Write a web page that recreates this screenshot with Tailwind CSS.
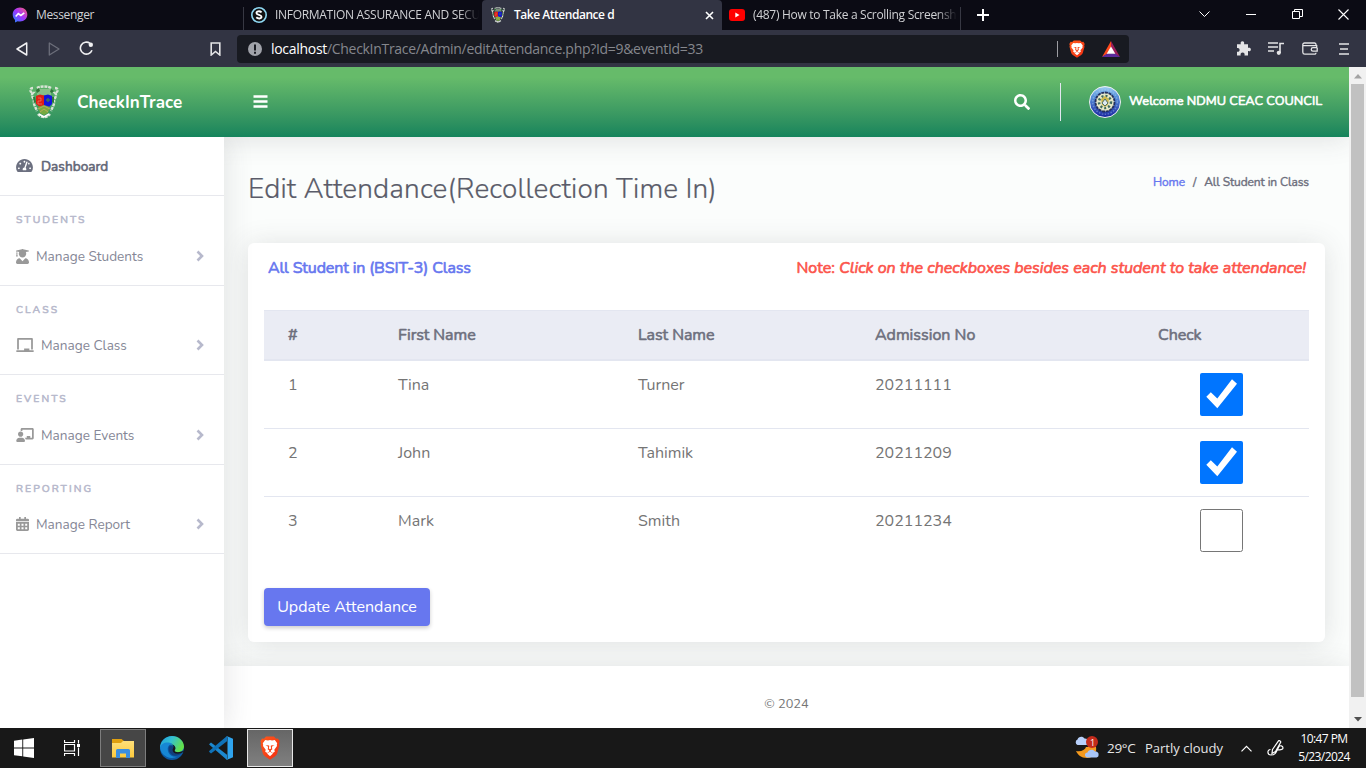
<!DOCTYPE html>
<html lang="en">
<head>
<meta charset="utf-8">
<title>Take Attendance</title>
<script src="https://cdn.jsdelivr.net/npm/@tailwindcss/browser@4"></script>
</head>
<body class="w-[1366px] h-[768px] overflow-hidden flex flex-col whitespace-nowrap font-['Nunito','Lato',sans-serif] text-[#757575]">
<svg class="absolute w-0 h-0">
  <defs>
    <linearGradient id="msg" x1="0" y1="1" x2="1" y2="0"><stop offset="0" stop-color="#1a8cff"/><stop offset=".5" stop-color="#a033ff"/><stop offset="1" stop-color="#ff6070"/></linearGradient>
    <linearGradient id="edge1" x1="0" y1="0" x2="1" y2=".4"><stop offset="0" stop-color="#1c9be0"/><stop offset=".5" stop-color="#35c1d0"/><stop offset="1" stop-color="#62e04c"/></linearGradient>
    <linearGradient id="lion" x1="0" y1="0" x2="1" y2="1"><stop offset="0" stop-color="#ff5a1c"/><stop offset="1" stop-color="#f02d12"/></linearGradient>
    <linearGradient id="folder" x1="0" y1="0" x2="0" y2="1"><stop offset="0" stop-color="#ffe07a"/><stop offset="1" stop-color="#fdc93c"/></linearGradient>
    <linearGradient id="seal" x1="0" y1="0" x2="0" y2="1"><stop offset="0" stop-color="#9fd0f5"/><stop offset=".3" stop-color="#5a95dc"/><stop offset="1" stop-color="#1724a0"/></linearGradient>
  </defs>
  <symbol id="brave" viewBox="0 0 20 24">
    <path fill="url(#lion)" d="M6 .5h8l2 2.200 2-.3 1.600 2.900-.6 2 .4 1.600-2.200 8.400c-.4 1.400-1.300 2.300-2.400 3.100L10 23.700l-4.800-3.300c-1.100-.8-2-1.700-2.400-3.100L.6 8.900 1 7.300l-.6-2L2 2.400l2 .3z"/>
    <path fill="#fff" d="M10 4l2 .4 2.800-.4 2.400 3.200-.4 1.600.2 1.200-2.700 3.800.5 1.900-2.100 1.300-2-1.500.2-1.300 1.500-1-.5-1.500.4-1.400 2.300-.9-2.700-.2-1.200.6.4 2.700-1.100.7-1.100-.7.4-2.700-1.200-.6-2.700.2 2.300.9.400 1.400-.5 1.500 1.500 1 .2 1.300-2 1.500-2.100-1.300.5-1.900L3 10l.2-1.200-.4-1.600L5.200 4 8 4.400z"/>
    <path fill="#fff" d="M10 15.800l3 1.700-3 2.700-3-2.700z"/>
  </symbol>
  <symbol id="crest" viewBox="0 0 30 34">
    <g fill="none" stroke="#d9e3d6" stroke-width="2.400" stroke-dasharray="3 .8">
      <path d="M4 3c-4 0-3 5 0 5-3 3 1 5 1 8-1 3 2 7 3 10M26 3c4 0 3 5 0 5 3 3-1 5-1 8 1 3-2 7-3 10"/>
      <path d="M8 3c3-2 11-2 14 0M9 29c3 4 9 4 12 0"/>
    </g>
    <path fill="#a8cba0" d="M8 4h14v6H8z" opacity=".6"/>
    <path fill="#31763a" d="M7 5l3-2 1 3-3 2zM22 4l3 2-2 2-2-1zM4 12l2 0 1 5-2 1zM25 12l-2 0 0 5 2 1z"/>
    <path fill="#e01e14" d="M7 11l4-1.500 4 1v12l-5-1-3-3z"/>
    <path fill="#1414dc" d="M15 10.500l4-1 4 1.500v8l-3 3-5 1z"/>
    <path fill="none" stroke="#f3a68e" stroke-width=".5" d="M9 13h3v3H9v3h4"/>
    <path fill="none" stroke="#3c6f60" stroke-width="1.500" d="M17 15h4M19 13v4"/>
    <path fill="#78a940" d="M9 22l6-2 6 2-2 6-4 2-4-2z"/>
    <path stroke="#b9a95a" stroke-width="1" fill="none" d="M9 24l6-3 6 3M11 27l4-3 4 3"/>
    <path stroke="#fff" stroke-width="1.500" fill="none" d="M10 29l5 3 5-3"/>
  </symbol>
  <symbol id="chev" viewBox="0 0 8 12"><path d="M1.500 1.500L6 6l-4.500 4.500" fill="none" stroke="#b7b9cc" stroke-width="2.600"/></symbol>
  <symbol id="checked" viewBox="0 0 43 43"><rect width="43" height="43" rx="2" fill="#0075ff"/><path d="M6.300 23.700l4.500-4.500 6.500 6.300L32 6.300l5 4.400-19.700 24.600z" fill="#fff"/></symbol>
</svg>

<!-- Tab strip -->
<div class="h-[30px] shrink-0 bg-[#0b0b14] flex font-['Open_Sans',sans-serif] text-[12px] text-[#d0d1d4]">
  <div class="w-[244px] flex items-center pl-[12px] border-r border-[#373843] [border-image:linear-gradient(transparent_24%,#373843_24%)_1]">
    <svg class="w-4 h-4" viewBox="0 0 16 16"><path fill="url(#msg)" d="M8 .5c4.300 0 7.300 3 7.300 7s-3 7-7.300 7c-.8 0-1.600-.1-2.300-.3L3 15.500v-2.600C1.500 11.600.7 9.700.7 7.500c0-4 3-7 7.300-7z"/><path d="M3.700 9.500l2.600-3 2.600 2 3.400-2.700" fill="none" stroke="#fff" stroke-width="1.600"/></svg>
    <span class="ml-2 tracking-[-0.35px]">Messenger</span>
  </div>
  <div class="w-[238px] flex items-center pl-[7px]">
    <svg class="w-4 h-4 shrink-0" viewBox="0 0 16 16"><circle cx="8" cy="8" r="7.200" fill="#111" stroke="#8fd8f2" stroke-width="1.600"/><path d="M10.600 5.400C8.500 3.500 5.300 4.200 5.500 6.100c.2 2.300 5 1.300 5 3.700 0 2-3.300 2.300-5.200.5" fill="none" stroke="#fff" stroke-width="1.900"/></svg>
    <span class="ml-2 w-[204px] overflow-hidden tracking-[-0.3px] [mask-image:linear-gradient(90deg,#000_90%,transparent)]">INFORMATION ASSURANCE AND SECURITY</span>
  </div>
  <div class="w-[240px] bg-[#323443] rounded-t-[4px] flex items-center pl-2 pr-[7px] text-white font-semibold">
    <svg class="w-4 h-4"><use href="#crest"/></svg>
    <span class="ml-2 tracking-[-0.47px]">Take Attendance d</span>
    <svg class="w-[9px] h-[9px] ml-auto mr-px" viewBox="0 0 9 9"><path d="M1 1l7 7M8 1L1 8" stroke="#fff" stroke-width="1.600"/></svg>
  </div>
  <div class="w-[239px] flex items-center pl-[7px] border-r border-[#373843] [border-image:linear-gradient(transparent_24%,#373843_24%)_1]">
    <svg class="w-4 h-3 shrink-0" viewBox="0 0 16 12"><rect width="16" height="12" rx="3" fill="#f00"/><path d="M6.300 3.500v5L10.500 6z" fill="#fff"/></svg>
    <span class="ml-2 w-[204px] overflow-hidden tracking-[-0.3px] [mask-image:linear-gradient(90deg,#000_90%,transparent)]">(487) How to Take a Scrolling Screenshot</span>
  </div>
  <svg class="w-3 h-3 mt-[9px] ml-4" viewBox="0 0 12 12"><path d="M6 0v12M0 6h12" stroke="#fff" stroke-width="2"/></svg>
  <svg class="w-[11px] h-[7px] mt-[11px] ml-auto" viewBox="0 0 11 7"><path d="M.5.5l5 5 5-5" fill="none" stroke="#fff" stroke-width="1"/></svg>
  <svg class="w-[10px] h-px mt-[14px] ml-[36px]"><rect width="10" height="1" fill="#fff"/></svg>
  <svg class="w-[11px] h-[11px] mt-[9px] ml-[36px]" viewBox="0 0 11 11"><path d="M.5 2.500h7v7h-7zM2.500 2.500v-2h8v7h-3" fill="none" stroke="#fff"/></svg>
  <svg class="w-[11px] h-[11px] mt-[9px] ml-[35px] mr-[17px]" viewBox="0 0 11 11"><path d="M.5.5l10 10M10.500.5l-10 10" stroke="#fff" stroke-width="1.100"/></svg>
</div>

<!-- Toolbar -->
<div class="h-[37px] shrink-0 bg-[#323443] flex items-center font-['Open_Sans',sans-serif] text-[14px]">
  <svg class="w-3 h-[14px] ml-4" viewBox="0 0 12 14"><path d="M10.700 1v12L1 7z" fill="none" stroke="#f0f0f2" stroke-width="1.500" stroke-linejoin="round"/></svg>
  <svg class="w-3 h-[14px] ml-[20px]" viewBox="0 0 12 14"><path d="M1.300 1v12L11 7z" fill="none" stroke="#6c6e7a" stroke-width="1.300" stroke-linejoin="round"/></svg>
  <svg class="w-[15px] h-[15px] ml-[19px]" viewBox="0 0 15 15"><path d="M11 2.300A6 6 0 1 0 13 9.300" fill="none" stroke="#f0f0f2" stroke-width="1.600"/><circle cx="11.800" cy="3.800" r="2.200" fill="#f0f0f2"/></svg>
  <svg class="w-[11px] h-[14px] ml-[116px]" viewBox="0 0 11 14"><path d="M1.200 1h8.600v12L5.500 9.500 1.200 13z" fill="none" stroke="#e4e4e6" stroke-width="1.600"/></svg>
  <div class="ml-[16px] w-[892px] h-[28px] rounded bg-[#181a21] flex items-center pl-[11px] pr-[9px] text-[#85878d]">
    <svg class="w-[14px] h-[14px]" viewBox="0 0 14 14"><circle cx="7" cy="7" r="7" fill="#a0a2a9"/><path d="M7 2.500v6M7 9.700v2" stroke="#181a21" stroke-width="2"/></svg>
    <span class="ml-[9px] -mt-px tracking-[-0.3px]"><span class="text-white">localhost</span>/CheckInTrace/Admin/editAttendance.php?Id=9&amp;eventId=33</span>
    <div class="ml-auto w-px h-4 bg-[#9c9da2]"></div>
    <svg class="w-4 h-[18px] ml-[11px]" viewBox="0 0 20 24" preserveAspectRatio="none"><use href="#brave" width="20" height="24"/></svg>
    <svg class="w-[18px] h-[16px] ml-[17px]" viewBox="0 0 18 16"><path d="M9 0L0 16l9-5z" fill="#ff4a1c"/><path d="M9 0l9 16-9-5z" fill="#9c1f5a"/><path d="M0 16h18l-5-3.500H5z" fill="#5a2a9c"/><path d="M9 5.500l4.300 7.200H4.700z" fill="#fff"/></svg>
  </div>
  <svg class="w-[15px] h-[15px] ml-[107px]" viewBox="0 0 15 15"><path fill="#e4e4e6" d="M1 3.200h3.800C4.300 1.400 5 .2 6.400.2S8.600 1.400 8 3.200h4v3.600c1.700-.5 2.900.2 2.900 1.600S13.700 10.500 12 10v4.400H8.500c.5-1.900-.4-2.900-1.900-2.900s-2.400 1-1.900 2.900H1v-3.700c1.600.4 2.600-.5 2.600-1.800S2.600 6.700 1 7.100z"/></svg>
  <svg class="w-4 h-[13px] ml-[17px]" viewBox="0 0 16 13"><path d="M0 1h10M0 5h10M0 9h6" stroke="#e4e4e6" stroke-width="1.500"/><path d="M12 11V1.500h4" fill="none" stroke="#e4e4e6" stroke-width="1.600"/><circle cx="10.800" cy="10.800" r="2.100" fill="#e4e4e6"/></svg>
  <svg class="w-4 h-[13px] ml-[18px]" viewBox="0 0 16 13"><path d="M14 4V2.500A1.500 1.500 0 0 0 12.500 1H2.500A1.700 1.700 0 0 0 .8 2.700v7.600A2 2 0 0 0 2.800 12.200h9.700a1.500 1.500 0 0 0 1.500-1.500M1 3.700h13.700v2H11a1.700 1.700 0 0 0 0 3.500h4.200V5.700" fill="none" stroke="#e4e4e6" stroke-width="1.300"/></svg>
  <svg class="w-[10px] h-[12px] ml-[21px]" viewBox="0 0 10 12"><path d="M0 1h10M1 6h8M0 11h10" stroke="#e4e4e6" stroke-width="1.500"/></svg>
</div>

<!-- Page viewport -->
<div class="h-[661px] shrink-0 flex bg-[#fbfdfc] overflow-hidden">
  <div class="w-[1349px] flex flex-col overflow-hidden">
    <header class="h-[70px] shrink-0 flex items-center relative z-[5] bg-linear-to-b from-[#66bb6a] from-15% to-[#14845c] text-white shadow-[0_2px_28px_rgba(58,59,69,.15)]">
      <svg class="w-[30px] h-[34px] ml-[29px]"><use href="#crest"/></svg>
      <span class="ml-[18px] mt-px text-[17px] font-bold tracking-[0.03px] w-[106px]">CheckInTrace</span>
      <svg class="w-[15px] h-[13px] ml-[70px] -mt-[2px]" viewBox="0 0 15 13"><path d="M.5 1.500h14M.5 6.500h14M.5 11.500h14" stroke="#fff" stroke-width="2.500"/></svg>
      <svg class="w-4 h-4 ml-auto" viewBox="0 0 512 512" fill="#fff"><path d="M505 442.700L405.300 343c-4.500-4.500-10.600-7-17-7H372c27.600-35.300 44-79.700 44-128C416 93.100 322.900 0 208 0S0 93.100 0 208s93.100 208 208 208c48.300 0 92.700-16.400 128-44v16.300c0 6.400 2.500 12.500 7 17l99.700 99.700c9.400 9.400 24.600 9.400 33.900 0l28.300-28.300c9.400-9.400 9.400-24.600.1-34zM208 336c-70.700 0-128-57.200-128-128 0-70.700 57.200-128 128-128 70.700 0 128 57.200 128 128 0 70.700-57.200 128-128 128z"/></svg>
      <div class="w-px h-[38px] ml-[30px] bg-[#e3e6f0]"></div>
      <svg class="w-8 h-8 ml-[28px]" viewBox="0 0 32 32"><circle cx="16" cy="16" r="15.500" fill="url(#seal)" stroke="#eef2ef"/><circle cx="16" cy="16" r="12.300" fill="none" stroke="#c9dcf2" stroke-width="1.500" stroke-dasharray="1.500 1.500" opacity=".35"/><circle cx="16" cy="16" r="9.500" fill="#e6e8c8" stroke="#24305e" stroke-width="1.800" stroke-dasharray="3 .7"/><circle cx="16" cy="16" r="6" fill="none" stroke="#3e6a5e" stroke-width="2.500" stroke-dasharray="2 2"/><path d="M12 13l4-3 4 3-1 6-3 2-3-2z" fill="#cdb94f"/><path d="M13 17l3-4 3 4-3 3z" fill="#dfeaf0" stroke="#31585c" stroke-width=".8"/></svg>
      <span class="ml-2 mr-[27px] w-[193px] text-[12.800px] [-webkit-text-stroke:0.600px]">Welcome NDMU CEAC COUNCIL</span>
    </header>

    <div class="flex-1 flex min-h-0">
      <!-- Sidebar -->
      <nav class="w-[224px] shrink-0 bg-white relative z-10 shadow-[0_2px_28px_rgba(58,59,69,.15)] [clip-path:inset(0_-40px_0_0)] text-[13.600px] text-[#858796] [&>section]:border-b [&>section]:border-[#e7e8ed] [&>section]:px-4">
        <section class="h-[59px] flex items-center text-[#636777]">
          <svg class="w-[17px] h-[15px] -mt-px" viewBox="0 0 576 512" fill="#6c7080"><path d="M288 32C128.940 32 0 160.940 0 320c0 52.800 14.250 102.260 39.060 144.800 5.610 9.620 16.300 15.200 27.440 15.200h443c11.140 0 21.830-5.580 27.440-15.200C561.750 422.260 576 372.800 576 320c0-159.060-128.940-288-288-288zm0 64c14.710 0 26.580 10.130 30.320 23.650-1.110 2.260-2.640 4.230-3.450 6.670l-9.220 27.670c-5.130 3.490-10.970 6.010-17.640 6.010-17.670 0-32-14.330-32-32S270.330 96 288 96zM96 384c-17.670 0-32-14.330-32-32s14.330-32 32-32 32 14.330 32 32-14.330 32-32 32zm48-160c-17.670 0-32-14.330-32-32s14.330-32 32-32 32 14.330 32 32-14.330 32-32 32zm246.770-72.410l-61.330 184C343.130 347.330 352 364.540 352 384c0 11.720-3.380 22.550-8.880 32H232.880c-5.500-9.450-8.880-20.280-8.880-32 0-33.940 26.500-61.430 59.900-63.590l61.340-184.010c4.170-12.560 17.730-19.450 30.360-15.170 12.570 4.190 19.350 17.790 15.170 30.360zm14.660 57.200l15.520-46.550c3.470-1.290 7.130-2.230 11.050-2.230 17.670 0 32 14.330 32 32s-14.330 32-32 32c-11.380-.01-20.890-6.280-26.570-15.220zM480 384c-17.670 0-32-14.330-32-32s14.330-32 32-32 32 14.330 32 32-14.330 32-32 32z"/></svg>
          <span class="ml-2 mt-[2px] tracking-[0.03px] [-webkit-text-stroke:0.600px]">Dashboard</span>
        </section>
        <section class="h-[90px] pt-4">
          <div class="h-4 leading-4 text-[10.400px] [-webkit-text-stroke:0.550px] tracking-[2.080px] text-[#b7b9cc]">STUDENTS</div>
          <div class="mt-[10px] h-[36px] flex items-center">
            <svg class="w-[13px] h-[15px]" viewBox="0 0 448 512" fill="#999"><path d="M319.400 320.600L224 416l-95.400-95.400C57.100 323.700 0 382.200 0 454.400v9.600c0 26.500 21.500 48 48 48h352c26.500 0 48-21.500 48-48v-9.600c0-72.200-57.100-130.700-128.600-133.800zM13.600 79.800l6.400 1.500v58.400c-7 4.200-12 11.500-12 20.300 0 8.400 4.600 15.400 11.100 19.700L3.500 242c-1.700 6.900 2.100 14 7.600 14h41.800c5.500 0 9.300-7.100 7.600-14l-15.600-62.300C51.400 175.400 56 168.400 56 160c0-8.800-5-16.100-12-20.300V87.100l66 15.900c-8.600 17.200-14 36.400-14 57 0 70.700 57.300 128 128 128s128-57.300 128-128c0-20.600-5.300-39.800-14-57l96.300-23.200c18.200-4.400 18.200-27.100 0-31.500l-190.400-46c-13-3.100-26.700-3.100-39.700 0L13.600 48.200c-18.100 4.400-18.100 27.200 0 31.600z"/></svg>
            <span class="ml-[7px] mt-[2px]">Manage Students</span><svg class="w-2 h-3 ml-auto mr-1"><use href="#chev"/></svg>
          </div>
        </section>
        <section class="h-[89px] pt-4">
          <div class="h-4 leading-4 text-[10.400px] [-webkit-text-stroke:0.550px] tracking-[2.080px] text-[#b7b9cc]">CLASS</div>
          <div class="mt-[9px] h-[36px] flex items-center">
            <svg class="w-[18px] h-[14px]" viewBox="0 0 640 512" fill="#999"><path d="M96 64h448v352h64V40c0-22.060-17.940-40-40-40H72C49.940 0 32 17.940 32 40v376h64V64zm528 384H480v-64H288v64H16c-8.840 0-16 7.160-16 16v32c0 8.840 7.160 16 16 16h608c8.840 0 16-7.160 16-16v-32c0-8.840-7.160-16-16-16z"/></svg>
            <span class="ml-[7px] mt-[2px]">Manage Class</span><svg class="w-2 h-3 ml-auto mr-1"><use href="#chev"/></svg>
          </div>
        </section>
        <section class="h-[90px] pt-4">
          <div class="h-4 leading-4 text-[10.400px] [-webkit-text-stroke:0.550px] tracking-[2.080px] text-[#b7b9cc]">EVENTS</div>
          <div class="mt-[10px] h-[36px] flex items-center">
            <svg class="w-[18px] h-[14px]" viewBox="0 0 640 512" fill="#999"><path d="M208 352c-2.390 0-4.780.35-7.060 1.090C187.980 357.300 174.350 360 160 360c-14.350 0-27.980-2.700-40.950-6.910-2.280-.74-4.660-1.090-7.050-1.090C49.940 352-.33 402.480 0 464.620.14 490.880 21.730 512 48 512h224c26.270 0 47.860-21.120 48-47.380.33-62.140-49.940-112.620-112-112.620zm-48-32c53.020 0 96-42.980 96-96s-42.980-96-96-96-96 42.980-96 96 42.980 96 96 96zM592 0H208c-26.470 0-48 22.250-48 49.590V96c23.420 0 45.100 6.780 64 17.800V64h352v288h-64v-64H384v64h-76.240c19.100 16.690 33.120 38.730 39.690 64H592c26.470 0 48-22.250 48-49.590V49.590C640 22.250 618.470 0 592 0z"/></svg>
            <span class="ml-[7px] mt-[2px]">Manage Events</span><svg class="w-2 h-3 ml-auto mr-1"><use href="#chev"/></svg>
          </div>
        </section>
        <section class="h-[89px] pt-4">
          <div class="h-4 leading-4 text-[10.400px] [-webkit-text-stroke:0.550px] tracking-[2.080px] text-[#b7b9cc]">REPORTING</div>
          <div class="mt-[9px] h-[36px] flex items-center">
            <svg class="w-[13px] h-[14px]" viewBox="0 0 13 14" fill="#999"><path d="M3 0h1.700v1.700h3.600V0H10v1.700h1.500A1.400 1.400 0 0 1 13 3.200v1H0v-1a1.400 1.400 0 0 1 1.400-1.500H3z"/><path fill-rule="evenodd" d="M0 5h13v7.500a1.400 1.400 0 0 1-1.400 1.500H1.400A1.400 1.400 0 0 1 0 12.500zM1.800 6.700v2h2v-2zm3.700 0v2h2v-2zm3.700 0v2h2v-2zm-7.400 3.500v2h2v-2zm3.700 0v2h2v-2zm3.700 0v2h2v-2z"/></svg>
            <span class="ml-[7px] mt-[2px]">Manage Report</span><svg class="w-2 h-3 ml-auto mr-1"><use href="#chev"/></svg>
          </div>
        </section>
      </nav>

      <!-- Content -->
      <main class="flex-1 flex flex-col">
        <div class="h-[106px] shrink-0 pl-6 pr-10 flex justify-between">
          <h1 class="mt-[35px] leading-[34px] text-[28px] font-light text-[#5a5c69] tracking-[0.15px] [-webkit-text-stroke:0.200px]">Edit Attendance(Recollection Time In)</h1>
          <div class="mt-[36px] h-[18px] leading-[18px] flex text-[12px] tracking-[-0.11px] text-[#6e707e] [-webkit-text-stroke:0.400px]"><span class="text-[#6777ef]">Home</span><span class="mx-2">/</span><span>All Student in Class</span></div>
        </div>
        <div class="h-[399px] shrink-0 ml-6 mr-6 bg-white rounded-md px-4 shadow-[0_2px_28px_rgba(58,59,69,.15)]">
          <div class="h-[67px] px-1 pt-[15px] flex justify-between text-[16px] leading-5 [-webkit-text-stroke:0.650px]">
            <span class="text-[#6777ef] tracking-[-0.14px]">All Student in (BSIT-3) Class</span>
            <span class="text-[#fc544b] mr-[-1px]">Note: <i>Click on the checkboxes besides each student to take attendance!</i></span>
          </div>
          <div class="grid grid-cols-[110px_240px_237px_283px_175px] text-[16px]">
            <div class="col-span-5 grid grid-cols-subgrid h-[51px] leading-[48px] bg-[#eaecf4] border-t border-b-2 border-[#e3e6f0] text-[#6e707e] tracking-[-0.07px] [-webkit-text-stroke:0.600px] [&>span]:pl-6"><span>#</span><span>First Name</span><span>Last Name</span><span class="tracking-normal">Admission No</span><span>Check</span></div>
            <div class="col-span-5 grid grid-cols-subgrid h-[68px] pt-3 leading-6 border-b border-[#e3e6f0] [&>span]:pl-6"><span>1</span><span>Tina</span><span>Turner</span><span>20211111</span><svg class="w-[43px] h-[43px] ml-[66px]"><use href="#checked"/></svg></div>
            <div class="col-span-5 grid grid-cols-subgrid h-[68px] pt-3 leading-6 border-b border-[#e3e6f0] [&>span]:pl-6"><span>2</span><span>John</span><span>Tahimik</span><span>20211209</span><svg class="w-[43px] h-[43px] ml-[66px]"><use href="#checked"/></svg></div>
            <div class="col-span-5 grid grid-cols-subgrid h-[68px] pt-3 leading-6 [&>span]:pl-6"><span>3</span><span>Mark</span><span>Smith</span><span>20211234</span><svg class="w-[43px] h-[43px] ml-[66px]" viewBox="0 0 43 43"><rect x=".5" y=".5" width="42" height="42" rx="2" fill="#fff" stroke="#767676"/></svg></div>
          </div>
          <button class="block mt-[23px] w-[166px] h-[38px] rounded bg-[#6777ef] text-white text-[16px] shadow-[0_2px_4px_rgba(0,0,0,.2)]">Update Attendance</button>
        </div>
        <footer class="mt-6 flex-1 bg-white shadow-[0_2px_28px_rgba(58,59,69,.15)] text-center pt-[28px] text-[12.800px] leading-5">© 2024</footer>
      </main>
    </div>
  </div>
  <!-- Scrollbar -->
  <div class="w-[17px] bg-[#f1f1f1] flex flex-col items-center pt-[7px] pb-[6px]">
    <svg class="w-[8px] h-[5px]" viewBox="0 0 8 5"><path d="M4 0l4 4.500H0z" fill="#a3a3a3"/></svg>
    <div class="w-[13px] h-[613px] mt-[5px] bg-[#c1c1c1]"></div>
    <svg class="w-[8px] h-[5px] mt-auto" viewBox="0 0 8 5"><path d="M4 4.500L8 0H0z" fill="#505050"/></svg>
  </div>
</div>

<!-- Taskbar -->
<div class="h-[40px] shrink-0 bg-[#181818] flex items-center font-['Open_Sans',sans-serif] text-white">
  <svg class="w-5 h-5 ml-[14px]" viewBox="0 0 20 20" fill="#fff"><path d="M0 2.800l8.300-1.200v7.900H0zM9.200 1.500L20 0v9.500H9.200zM0 10.400h8.300v7.900L0 17.200zM9.200 10.400H20V20L9.200 18.500z"/></svg>
  <svg class="w-4 h-4 ml-[30px]" viewBox="0 0 16 16"><path d="M.5 0v2.500h10V0M.5 4.500h10v6.500H.5zM.5 16v-2.500h10V16M14.500 0v3.500M14.500 7.500V16" fill="none" stroke="#fff" stroke-width="1.200"/><path d="M13 4h3v3h-3z" fill="#fff"/></svg>
  <div class="w-[46px] h-[38px] ml-[20px] bg-[#464646] border border-[#7d7d7d] flex items-center justify-center">
    <svg class="w-[22px] h-[19px]" viewBox="0 0 22 19"><path d="M0 0h9.500L12 2v3H0z" fill="#e0a010"/><path d="M0 4h9l2-2h11v16.500H0z" fill="url(#folder)"/><path d="M4 19v-7.500a1.500 1.500 0 0 1 1.500-1.500h11a1.500 1.500 0 0 1 1.500 1.500V19h-4v-4.500H8V19z" fill="#3a8ee0"/></svg>
  </div>
  <svg class="w-6 h-6 ml-[14px]" viewBox="0 0 24 24"><circle cx="12" cy="12" r="12" fill="#0c59a4"/><path d="M0 12C0 5.400 5.400 0 12 0s12 5 12 10.500c0 3.500-2.800 5.700-6 5.700-2.700 0-4-1-3.300-2 1.800-2.500-.2-6-4-6C5.500 8.200.5 10 0 12z" fill="url(#edge1)"/><path d="M0 12c.4-3.500 4-5.500 7.500-5.500 2 0 4 .5 5 1.500-4 0-6 4-4 8.500 2 4 6 5 9 4A12 12 0 0 1 0 12z" fill="#1787d4"/><path d="M9 11c-1.500 4 2.500 9.500 7 8.700 2.500-.4 4.500-1.500 6-2.700-2.500 1-6.500 1.200-8.500-1.500-1-1.400 1.200-1.500.8-3.500S10 8.500 9 11z" fill="#113e7c"/><path d="M14.700 14.200c1.500-2 .5-5-2.700-5.800 3 2 .6 4.500.6 5.600 0 2.500 3 4.600 6.800 3.600 3.600-.9 5-2.400 5.600-4-3 3-11 3.500-10.300.6z" fill="#181818"/></svg>
  <svg class="w-6 h-6 ml-[25px]" viewBox="0 0 24 24"><path d="M0 8.200l2-1.700 16 12.300V24L1.500 9.800z" fill="#1c88cf"/><path d="M0 15.800l2 1.700L18 5.200V0L.5 14.800z" fill="#0f72b8"/><path d="M17.500 0L24 2.800v18.400L17.500 24l1-1.500v-21z" fill="#2fa4ee"/></svg>
  <div class="w-[46px] h-[38px] ml-[14px] border border-[#e8e8e8] bg-linear-to-b from-[#666] to-[#808080] flex items-center justify-center">
    <svg class="w-5 h-6"><use href="#brave"/></svg>
  </div>
  <svg class="w-[25px] h-[24px] ml-auto mb-px" viewBox="0 0 25 24"><path d="M2 15c5 1 9-1 10-4l10 0c1 5-2 11-9 11-6 0-9-3-11-7z" fill="#f59a1e"/><path d="M3.500 9a3 3 0 0 1 0-5.500C4.500 0 9 0 10.500 2.500c3 0 4 1.500 4 3S13.500 9 12 9z" fill="#b8d0fa"/><path d="M13 21.500c-3-1-2.500-5 .5-5 1-3.500 6-3.500 7.500-1 3 0 4 2 3.500 4 0 1.500-1.500 2-3 2z" fill="#a8c6f8"/><circle cx="18" cy="6" r="6" fill="#c42b1c"/><text x="16" y="9.500" font-size="9" fill="#fff" font-family="Open Sans">1</text></svg>
  <span class="ml-[8px] mt-px text-[13.500px] w-[28px] tracking-[-0.3px] text-[#e6e6e6]">29°C</span>
  <span class="ml-[10px] mt-[2px] text-[13px] w-[78px] text-[#e6e6e6]">Partly cloudy</span>
  <svg class="w-[11px] h-[7px] ml-[18px]" viewBox="0 0 11 7"><path d="M.5 6.300l5-5 5 5" fill="none" stroke="#fff" stroke-width="1.200"/></svg>
  <svg class="w-[17px] h-[16px] ml-[15px]" viewBox="0 0 17 16"><path d="M5.500 9.500L11.500.8c.7-.8 2.700.6 2.200 1.500L8.500 11.500 5 13.500zM3.500 9.500C0 9.500 0 15 4 15c5 0 5-3 8-8.500 1-1.500 4-.5 4 1.500 0 1.500-3 2-6 2" fill="none" stroke="#fff" stroke-width="1.200"/></svg>
  <div class="w-[56px] ml-[12px] mr-[14px] text-center text-[12px] leading-[18px] tracking-[-0.6px]"><div>10:47 PM</div><div>5/23/2024</div></div>
</div>
</body>
</html>
